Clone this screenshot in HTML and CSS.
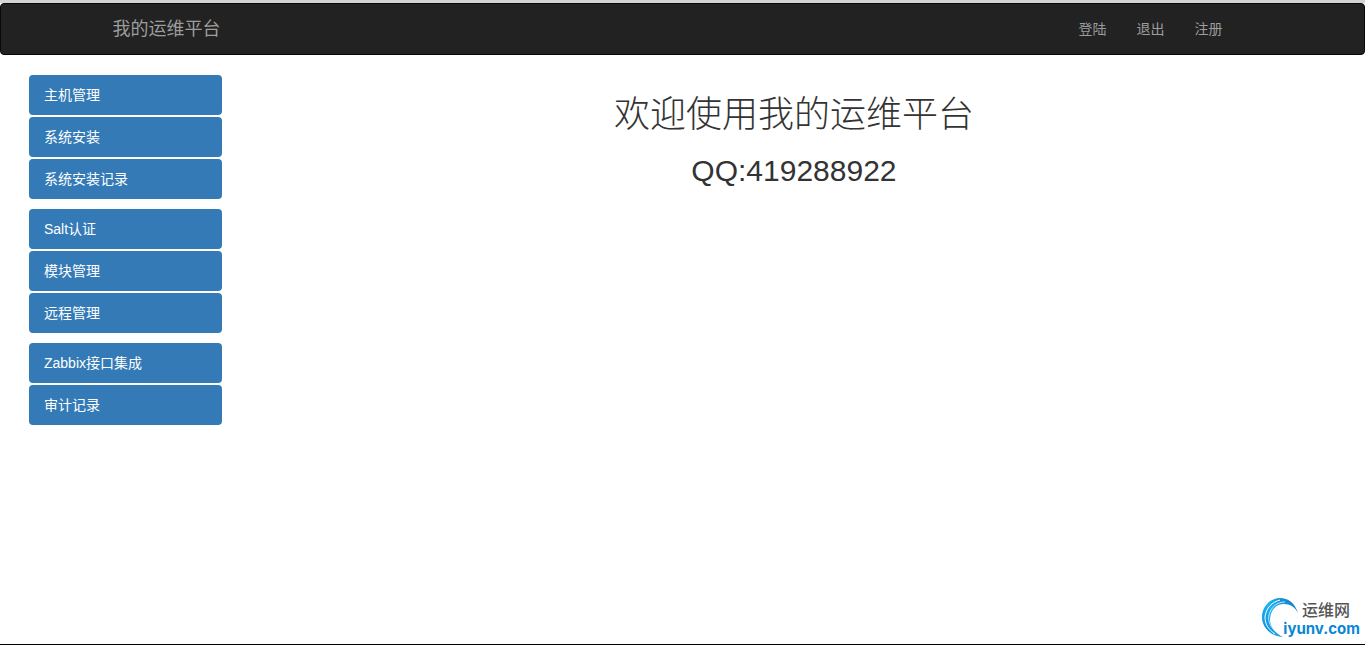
FILE: index.html
```html
<!DOCTYPE html>
<html lang="zh-CN">
<head>
  <meta charset="utf-8">
  <meta name="viewport" content="width=device-width, initial-scale=1">
  <title>我的运维平台</title>
  <link rel="stylesheet" href="styles.css">
</head>
<body>
  <header class="navbar">
    <div class="navbar-container">
      <a class="navbar-brand" href="#">我的运维平台</a>
      <nav class="navbar-links">
        <a href="#">登陆</a>
        <a href="#">退出</a>
        <a href="#">注册</a>
      </nav>
    </div>
  </header>

  <div class="content">
    <nav class="sidebar">
      <ul class="pills">
        <li><a href="#">主机管理</a></li>
        <li><a href="#">系统安装</a></li>
        <li><a href="#">系统安装记录</a></li>
      </ul>
      <ul class="pills">
        <li><a href="#">Salt认证</a></li>
        <li><a href="#">模块管理</a></li>
        <li><a href="#">远程管理</a></li>
      </ul>
      <ul class="pills">
        <li><a href="#">Zabbix接口集成</a></li>
        <li><a href="#">审计记录</a></li>
      </ul>
    </nav>
    <main class="main">
      <h1 class="title">欢迎使用我的运维平台</h1>
      <h2 class="subtitle">QQ:419288922</h2>
    </main>
  </div>

  <footer class="footer">
    <a class="logo" href="#">
      <svg class="logo-mark" viewBox="0 0 40 42" aria-hidden="true">
        <defs>
          <linearGradient id="ring" x1="0" y1="1" x2="1" y2="0">
            <stop offset="0" stop-color="#0a86d6"></stop>
            <stop offset="0.5" stop-color="#1db4f2"></stop>
            <stop offset="1" stop-color="#0f6fbe"></stop>
          </linearGradient>
        </defs>
        <path fill="url(#ring)" d="M37 16C34 6 27 1 19 1C9 1 1 10 1 20C1 30 9 39 22 40C14 36 10 31 9 24C9 13 15 7 23 7C29 7 34 10 37 16Z"></path>
        <path fill="none" stroke="#fff" stroke-width="1" d="M14 37C7 32 4 27 4 20C5 11 11 5 19 3"></path>
        <path fill="none" stroke="#bfe8fb" stroke-width="1" d="M14 34C8 28 7 23 8 18C10 10 16 5 24 5"></path>
      </svg>
      <span class="logo-text">
        <span class="logo-name">运维网</span>
        <span class="logo-domain">iyunv.com</span>
      </span>
    </a>
  </footer>
</body>
</html>
```
FILE: styles.css
```css
* {
  box-sizing: border-box;
}

body {
  display: flex;
  flex-direction: column;
  min-height: 100vh;
  margin: 0;
  border-top: 3px solid #d4d4d4;
  border-bottom: 1px solid #000;
  background: #fff;
  color: #333;
  font-family: "Liberation Sans", "Noto Sans CJK SC", sans-serif;
  font-size: 14px;
  line-height: 20px;
}

a {
  color: inherit;
  text-decoration: none;
}

.navbar {
  margin-bottom: 20px;
  border: 1px solid #080808;
  border-radius: 4px;
  background: #222;
  color: #9d9d9d;
}

.navbar-container {
  display: flex;
  align-items: center;
  justify-content: space-between;
  max-width: 1170px;
  min-height: 50px;
  margin: 0 auto;
  padding: 0 15px;
}

.navbar-brand {
  font-size: 18px;
}

.navbar-links {
  display: flex;
  padding-right: 30px;
  gap: 30px;
}

.content {
  display: grid;
  grid-template-columns: minmax(0, 2fr) minmax(0, 10fr);
  flex: 1;
  padding: 0 14px;
}

.sidebar {
  display: flex;
  flex-direction: column;
  gap: 10px;
  padding: 0 15px;
}

.pills {
  display: flex;
  flex-direction: column;
  gap: 2px;
  margin: 0;
  padding: 0;
  list-style: none;
}

.pills a {
  display: block;
  padding: 10px 15px;
  border-radius: 4px;
  background: #337ab7;
  color: #fff;
}

.main {
  padding: 20px 15px;
  text-align: center;
}

.title,
.subtitle {
  margin: 0;
  color: #333;
  line-height: 40px;
}

.title {
  margin-bottom: 16px;
  font-size: 36px;
  font-weight: 300;
}

.subtitle {
  font-size: 30px;
  font-weight: 400;
}

.footer {
  display: flex;
  justify-content: flex-end;
  padding: 0 5px 5px;
}

.logo {
  display: flex;
  align-items: flex-end;
}

.logo-mark {
  width: 40px;
  height: 42px;
}

.logo-text {
  display: flex;
  flex-direction: column;
  align-items: flex-end;
  margin-left: -18px;
  padding-bottom: 1px;
  line-height: 18px;
}

.logo-name {
  padding-right: 10px;
  color: #555;
  font-size: 16px;
  font-weight: 500;
}

.logo-domain {
  color: #0a86d6;
  font-family: Inter, "Liberation Sans", sans-serif;
  font-size: 15px;
  font-weight: 700;
}
```
